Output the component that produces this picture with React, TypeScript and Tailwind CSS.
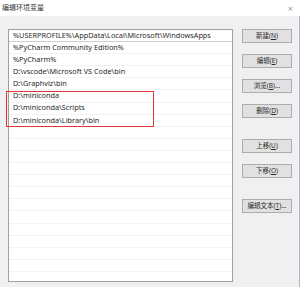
const paths = [
  "%USERPROFILE%\\AppData\\Local\\Microsoft\\WindowsApps",
  "%PyCharm Community Edition%",
  "%PyCharm%",
  "D:\\vscode\\Microsoft VS Code\\bin",
  "D:\\Graphviz\\bin",
  "D:\\miniconda",
  "D:\\miniconda\\Scripts",
  "D:\\miniconda\\Library\\bin",
];

const rows = [...paths, ...Array(13).fill("")];

function DlgButton({ label, hotkey, tail = "" }: { label: string; hotkey: string; tail?: string }) {
  return (
    <button className="h-[14px] w-[50px] border border-[#adadad] bg-[#e1e1e1] text-[6.5px] leading-none text-[#2b2b2b]">
      {label}(<span className="underline">{hotkey}</span>){tail}
    </button>
  );
}

export default function App() {
  return (
    <div className="flex h-[287px] w-[300px] flex-col overflow-hidden bg-[#f0f0f0] font-['Noto_Sans','Noto_Sans_CJK_SC',sans-serif]">
      {/* title bar */}
      <div className="flex h-[16px] items-center justify-between bg-white pl-[2px] pr-[7px]">
        <span className="text-[7px] text-[#333]">编辑环境变量</span>
        <span className="text-[9px] font-light leading-none text-[#555]">×</span>
      </div>

      <div className="flex flex-1 border-r border-[#b6b0d6] pt-[13px] pl-[8px]">
        {/* path list */}
        <div className="relative h-[253px] w-[225px] overflow-hidden border border-[#a0a0a0] bg-white">
          {rows.map((p, i) => (
            <div
              key={i}
              className={
                "flex h-[12.1px] items-center pl-[4px] text-[7.3px] leading-none text-[#2a2a2a] " +
                (i === 0 ? "border-b border-[#cfcfcf]" : "border-b border-[#f3f3f3]")
              }
            >
              {p}
            </div>
          ))}
        </div>

        {/* buttons */}
        <div className="flex flex-col pl-[9px]">
          <div className="flex flex-col gap-[11px]">
            <DlgButton label="新建" hotkey="N" />
            <DlgButton label="编辑" hotkey="E" />
            <DlgButton label="浏览" hotkey="B" tail="..." />
            <DlgButton label="删除" hotkey="D" />
          </div>
          <div className="mt-[21px] flex flex-col gap-[11px]">
            <DlgButton label="上移" hotkey="U" />
            <DlgButton label="下移" hotkey="O" />
          </div>
          <div className="mt-[21px] flex">
            <DlgButton label="编辑文本" hotkey="T" tail="..." />
          </div>
        </div>
      </div>

      {/* highlight annotation */}
      <div className="pointer-events-none absolute left-[6px] top-[91px] h-[36px] w-[148px] border-[1.5px] border-[#e0343c]" />
    </div>
  );
}
